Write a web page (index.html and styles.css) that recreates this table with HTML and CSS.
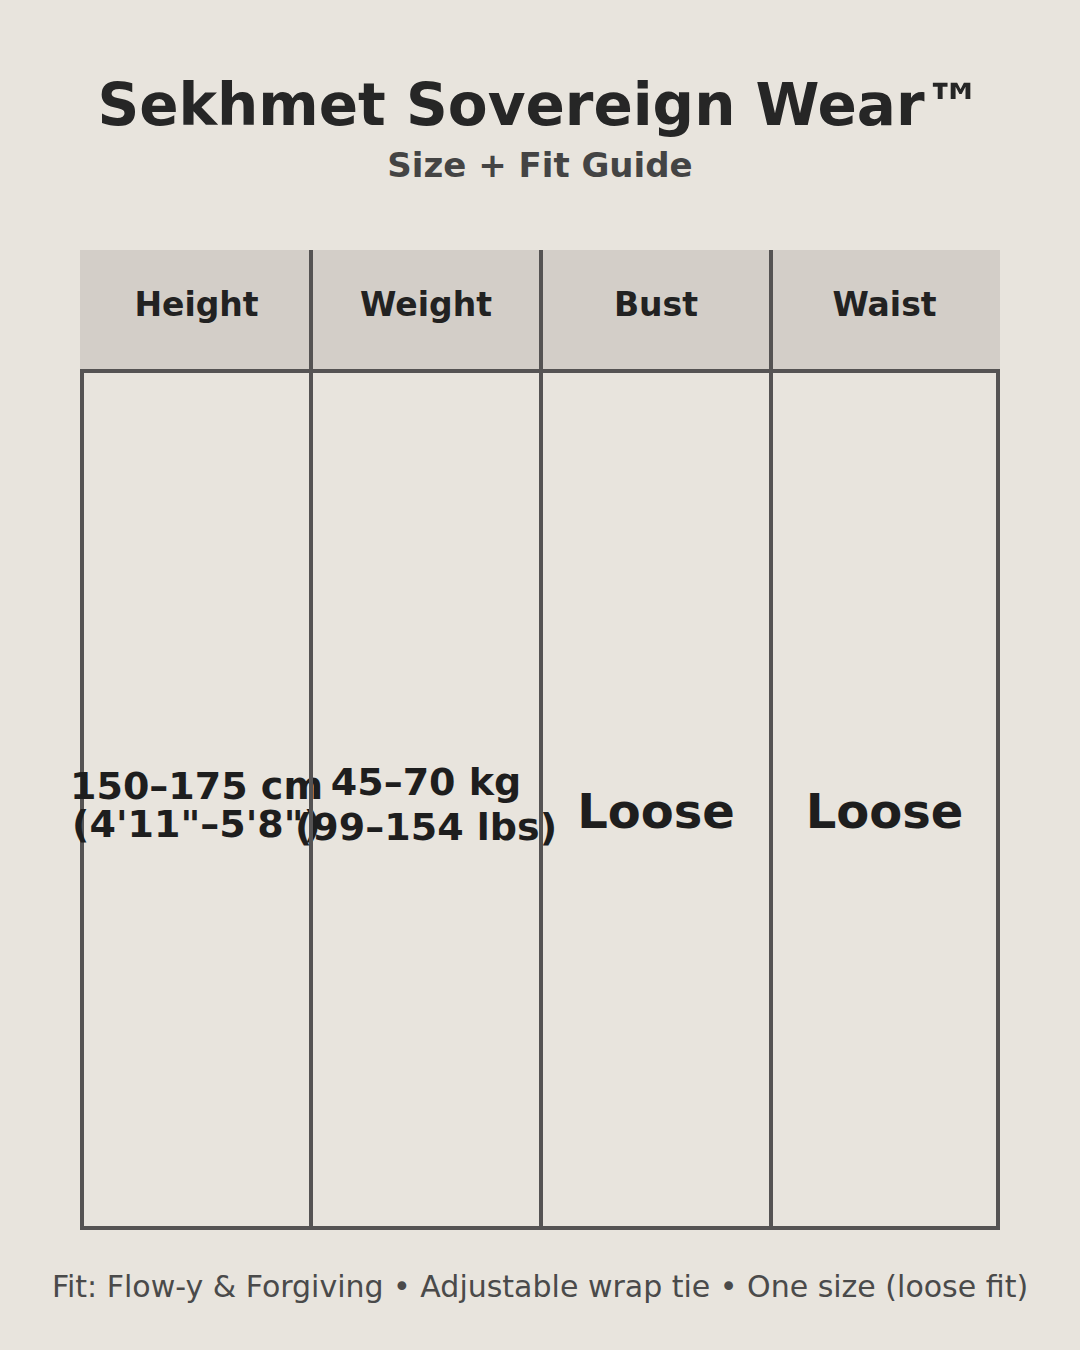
FILE: index.html
```html
<!DOCTYPE html>
<html lang="en">
<head>
<meta charset="utf-8">
<title>Sekhmet Sovereign Wear – Size + Fit Guide</title>
<link rel="stylesheet" href="styles.css">
</head>
<body>
<main class="page">
  <header class="intro">
    <h1 class="title">Sekhmet Sovereign Wear™</h1>
    <p class="subtitle">Size + Fit Guide</p>
  </header>
  <section class="chart">
    <div class="chart-head">
      <div class="head-cell">Height</div>
      <div class="head-cell">Weight</div>
      <div class="head-cell">Bust</div>
      <div class="head-cell">Waist</div>
    </div>
    <div class="chart-body">
      <div class="body-cell"><span class="val val-height">150–175 cm<br>(4'11"–5'8")</span></div>
      <div class="body-cell"><span class="val val-weight">45–70 kg<br>(99–154 lbs)</span></div>
      <div class="body-cell body-cell-low"><span class="val val-big">Loose</span></div>
      <div class="body-cell body-cell-low"><span class="val val-big">Loose</span></div>
    </div>
  </section>
  <p class="footnote">Fit: Flow-y &amp; Forgiving • Adjustable wrap tie • One size (loose fit)</p>
</main>
</body>
</html>
```
FILE: styles.css
```css
html, body {
  margin: 0;
  padding: 0;
  background: #e8e4dd;
}
body {
  font-family: "DejaVu Sans", "Liberation Sans", sans-serif;
  width: 1080px;
  height: 1350px;
  overflow: hidden;
}
.page {
  display: flex;
  flex-direction: column;
  align-items: center;
  padding-top: 72px;
}
.intro {
  display: flex;
  flex-direction: column;
  align-items: center;
}
.title {
  margin: 0;
  font-size: 58px;
  line-height: 66px;
  font-weight: bold;
  color: #262626;
  white-space: nowrap;
}
.subtitle {
  margin: 7px 0 0;
  font-size: 34px;
  line-height: 40px;
  font-weight: bold;
  color: #444444;
}
.chart {
  margin-top: 65px;
  width: 920px;
  display: flex;
  flex-direction: column;
}
.chart-head {
  display: grid;
  grid-template-columns: 225px 230px 230px 227px;
  padding: 0 4px;
  background: #d3cec8;
  height: 119px;
}
.head-cell {
  display: flex;
  align-items: center;
  justify-content: center;
  padding-bottom: 10px;
  font-size: 33px;
  font-weight: bold;
  color: #222222;
}
.head-cell + .head-cell {
  border-left: 4px solid #555353;
}
.chart-body {
  display: grid;
  grid-template-columns: 225px 230px 230px 227px;
  border: 4px solid #555353;
  height: 853px;
}
.body-cell {
  display: flex;
  align-items: center;
  justify-content: center;
  padding-top: 10px;
  min-width: 0;
  text-align: center;
  white-space: nowrap;
  color: #1e1e1e;
  font-weight: bold;
}
.body-cell + .body-cell {
  border-left: 4px solid #555353;
}
.body-cell-low {
  padding-top: 22px;
}
.val-height {
  font-size: 38px;
  line-height: 38px;
}
.val-weight {
  font-size: 38px;
  line-height: 45px;
}
.val-big {
  font-size: 48px;
  line-height: 56px;
}
.footnote {
  margin: 40px 0 0;
  font-size: 30px;
  line-height: 34px;
  color: #4a4a4a;
  white-space: nowrap;
}
```
